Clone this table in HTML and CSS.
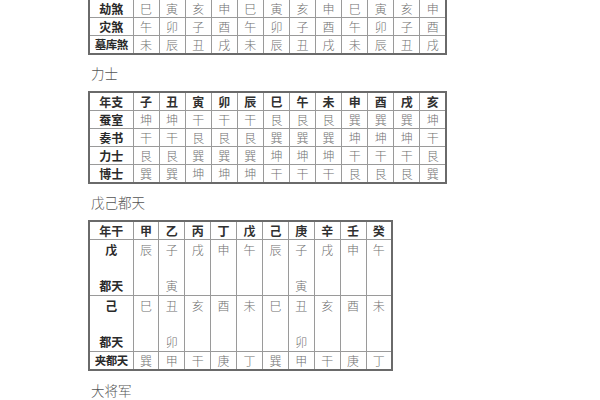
FILE: index.html
```html
<!DOCTYPE html>
<html lang="zh">
<head>
<meta charset="utf-8">
<link rel="stylesheet" href="styles.css">
</head>
<body>
<div class="page">
  <table class="grid wide first">
    <colgroup><col class="c0"><col span="12"></colgroup>
    <tr><th>劫煞</th><td>巳</td><td>寅</td><td>亥</td><td>申</td><td>巳</td><td>寅</td><td>亥</td><td>申</td><td>巳</td><td>寅</td><td>亥</td><td>申</td></tr>
    <tr><th>灾煞</th><td>午</td><td>卯</td><td>子</td><td>酉</td><td>午</td><td>卯</td><td>子</td><td>酉</td><td>午</td><td>卯</td><td>子</td><td>酉</td></tr>
    <tr><th class="sm">墓库煞</th><td>未</td><td>辰</td><td>丑</td><td>戌</td><td>未</td><td>辰</td><td>丑</td><td>戌</td><td>未</td><td>辰</td><td>丑</td><td>戌</td></tr>
  </table>
  <div class="label">力士</div>
  <table class="grid wide">
    <colgroup><col class="c0"><col span="12"></colgroup>
    <tr class="head"><th>年支</th><th>子</th><th>丑</th><th>寅</th><th>卯</th><th>辰</th><th>巳</th><th>午</th><th>未</th><th>申</th><th>酉</th><th>戌</th><th>亥</th></tr>
    <tr><th>蚕室</th><td>坤</td><td>坤</td><td>干</td><td>干</td><td>干</td><td>艮</td><td>艮</td><td>艮</td><td>巽</td><td>巽</td><td>巽</td><td>坤</td></tr>
    <tr><th>奏书</th><td>干</td><td>干</td><td>艮</td><td>艮</td><td>艮</td><td>巽</td><td>巽</td><td>巽</td><td>坤</td><td>坤</td><td>坤</td><td>干</td></tr>
    <tr><th>力士</th><td>艮</td><td>艮</td><td>巽</td><td>巽</td><td>巽</td><td>坤</td><td>坤</td><td>坤</td><td>干</td><td>干</td><td>干</td><td>艮</td></tr>
    <tr><th>博士</th><td>巽</td><td>巽</td><td>坤</td><td>坤</td><td>坤</td><td>干</td><td>干</td><td>干</td><td>艮</td><td>艮</td><td>艮</td><td>巽</td></tr>
  </table>
  <div class="label">戊己都天</div>
  <table class="grid narrow">
    <colgroup><col class="c0"><col span="10"></colgroup>
    <tr class="head"><th>年干</th><th>甲</th><th>乙</th><th>丙</th><th>丁</th><th>戊</th><th>己</th><th>庚</th><th>辛</th><th>壬</th><th>癸</th></tr>
    <tr class="tall"><th>戊<br><br>都天</th><td>辰</td><td>子<br><br>寅</td><td>戌</td><td>申</td><td>午</td><td>辰</td><td>子<br><br>寅</td><td>戌</td><td>申</td><td>午</td></tr>
    <tr class="tall t2"><th>己<br><br>都天</th><td>巳</td><td>丑<br><br>卯</td><td>亥</td><td>酉</td><td>未</td><td>巳</td><td>丑<br><br>卯</td><td>亥</td><td>酉</td><td>未</td></tr>
    <tr><th class="sm">夹都天</th><td>巽</td><td>甲</td><td>干</td><td>庚</td><td>丁</td><td>巽</td><td>甲</td><td>干</td><td>庚</td><td>丁</td></tr>
  </table>
  <div class="label last">大将军</div>
</div>
</body>
</html>
```
FILE: styles.css
```css
html, body {
  margin: 0;
  padding: 0;
  background: #ffffff;
}
body {
  font-family: "Noto Sans CJK SC", "Noto Sans", sans-serif;
  overflow: hidden;
}
.page {
  padding-left: 88px;
  display: flex;
  flex-direction: column;
  align-items: flex-start;
}
.grid {
  border-collapse: collapse;
  table-layout: fixed;
  border: 2px solid #6a6a6a;
}
.grid.first {
  border-top: none;
  margin-top: -1px;
}
.grid.wide { width: 359px; }
.grid.narrow { width: 305px; }
.grid col.c0 { width: 44px; }
.grid th, .grid td {
  border: 1px solid #9a9a9a;
  height: 17px;
  padding: 0;
  text-align: center;
  vertical-align: middle;
  font-size: 12px;
  line-height: 17px;
}
.grid th {
  font-weight: 700;
  color: #2a2a2a;
}
.grid th.sm {
  font-size: 11.5px;
  letter-spacing: -0.5px;
}
.grid td {
  font-weight: 300;
  color: #6f6f6f;
}
.grid tr.head th {
  color: #303030;
}
.grid tr.tall th, .grid tr.tall td {
  height: 53px;
  vertical-align: top;
  line-height: 18px;
  padding-top: 1px;
}
.grid tr.tall.t2 th, .grid tr.tall.t2 td {
  height: 52px;
}
.label {
  height: 36px;
  line-height: 36px;
  padding-left: 3px;
  font-size: 13.5px;
  font-weight: 300;
  color: #555555;
}
.label.last {
  height: 36px;
  line-height: 38px;
}
```
